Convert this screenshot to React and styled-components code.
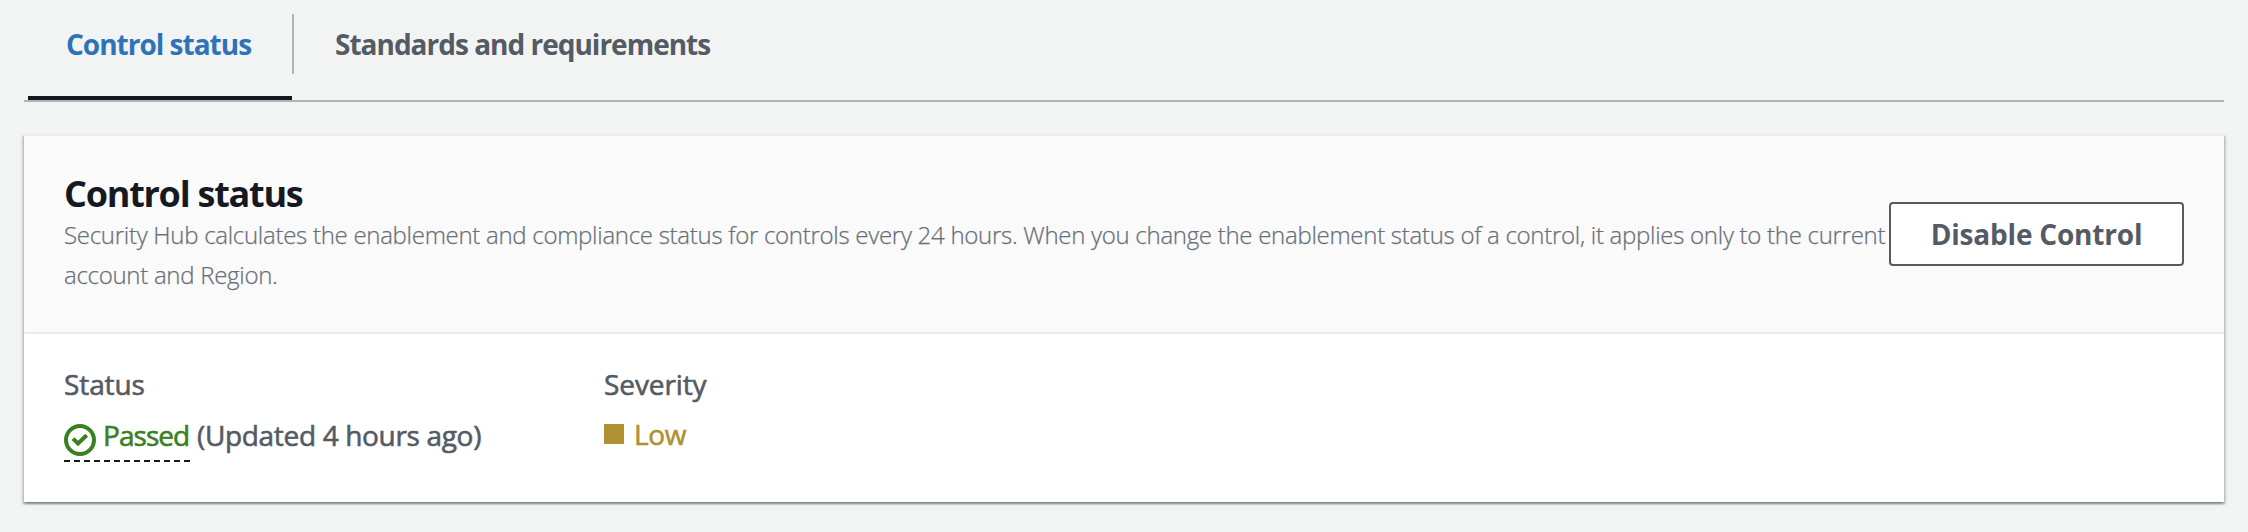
import React from 'react';
import styled, { createGlobalStyle } from 'styled-components';

const GlobalStyle = createGlobalStyle`
  * { box-sizing: border-box; }
  body {
    margin: 0;
    background: #f2f3f3;
    font-family: "Open Sans", "Noto Sans", sans-serif;
    font-size: 28px;
    line-height: 40px;
    color: #545b64;
  }
`;

const Page = styled.main`
  min-height: 532px;
  padding: 14px 24px 0;
`;

const TabList = styled.nav`
  display: flex;
  height: 88px;
  padding-left: 4px;
  border-bottom: 2px solid #aab7b8;
`;

const Tab = styled.button`
  display: flex;
  align-items: flex-start;
  width: ${p => p.$width}px;
  height: 86px;
  padding: 10px 0 0 ${p => p.$inset}px;
  border: 0;
  border-bottom: 4px solid ${p => (p.$active ? '#16191f' : 'transparent')};
  background: none;
  font: inherit;
  font-weight: 700;
  letter-spacing: -1px;
  white-space: nowrap;
  color: ${p => (p.$active ? '#2e73b8' : '#545b64')};
`;

const TabDivider = styled.span`
  width: 2px;
  height: 60px;
  background: #aab7b8;
`;

const Card = styled.section`
  height: 368px;
  margin-top: 32px;
  border-top: 2px solid #eaeded;
  background: #fff;
  box-shadow:
    0 2px 2px 0 rgba(0, 28, 36, 0.3),
    2px 2px 2px 0 rgba(0, 28, 36, 0.15),
    -2px 2px 2px 0 rgba(0, 28, 36, 0.15);
`;

const CardHeader = styled.header`
  display: flex;
  align-items: center;
  justify-content: space-between;
  height: 198px;
  padding: 0 40px;
  border-bottom: 2px solid #eaeded;
  background: #fafafa;
`;

const HeaderText = styled.div`
  flex: 1;
  min-width: 0;
  padding-bottom: 3px;
`;

const Title = styled.h2`
  margin: 0;
  padding-top: 1px;
  font-size: 36px;
  line-height: 43px;
  font-weight: 700;
  letter-spacing: -1.25px;
  color: #16191f;
`;

const Description = styled.p`
  margin: 0;
  font-size: 24px;
  line-height: 40px;
  font-weight: 300;
  letter-spacing: -0.284px;
  -webkit-text-stroke: 0.25px #687078;
  color: #687078;
`;

const OutlineButton = styled.button`
  flex: none;
  width: 295px;
  height: 64px;
  padding: 0;
  border: 2px solid #545b64;
  border-radius: 4px;
  background: #fff;
  font: inherit;
  font-weight: 700;
  letter-spacing: -0.2px;
  color: #545b64;
`;

const Fields = styled.div`
  display: grid;
  grid-template-columns: 540px 1fr;
  padding: 30px 40px 0;
  font-weight: 500;
  -webkit-text-stroke: 0.6px currentColor;
`;

const FieldLabel = styled.div`
  letter-spacing: -0.1px;
`;

const FieldValue = styled.div`
  display: flex;
  align-items: flex-start;
  margin-top: ${p => p.$gap}px;
`;

const StatusLink = styled.span`
  display: flex;
  width: 126px;
  height: 47px;
  letter-spacing: -0.95px;
  color: #3a8021;
  background: repeating-linear-gradient(to right, #16191f 0 6px, transparent 6px 10px) bottom / 100% 2px no-repeat;
`;

const StatusIcon = styled.svg`
  flex: none;
  width: 32px;
  height: 32px;
  margin: 9px 7px 0 0;
`;

const Updated = styled.span`
  margin-left: 7px;
  letter-spacing: -0.33px;
`;

const Severity = styled.span`
  display: flex;
  align-items: center;
  color: #b09132;
`;

const SeveritySwatch = styled.span`
  width: 20px;
  height: 20px;
  margin-right: 10px;
  background: #b09132;
`;

const SeverityText = styled.span`
  letter-spacing: -0.4px;
`;

export default function App() {
  return (
    <>
      <GlobalStyle />
      <Page>
        <TabList>
          <Tab $active $width={264} $inset={38}>Control status</Tab>
          <TabDivider />
          <Tab $width={460} $inset={41}>Standards and requirements</Tab>
        </TabList>
        <Card>
          <CardHeader>
            <HeaderText>
              <Title>Control status</Title>
              <Description>
                Security Hub calculates the enablement and compliance status for controls every 24 hours. When you change the enablement status of a control, it applies only to the current account and Region.
              </Description>
            </HeaderText>
            <OutlineButton>Disable Control</OutlineButton>
          </CardHeader>
          <Fields>
            <div>
              <FieldLabel>Status</FieldLabel>
              <FieldValue $gap={11}>
                <StatusLink>
                  <StatusIcon viewBox="0 0 32 32" fill="none" stroke="#3a8021" strokeWidth="4">
                    <circle cx="16" cy="16" r="14" />
                    <path d="M9 14.6L14 19.5L22.7 11.2" />
                  </StatusIcon>
                  Passed
                </StatusLink>
                <Updated>(Updated 4 hours ago)</Updated>
              </FieldValue>
            </div>
            <div>
              <FieldLabel>Severity</FieldLabel>
              <FieldValue $gap={10}>
                <Severity>
                  <SeveritySwatch />
                  <SeverityText>Low</SeverityText>
                </Severity>
              </FieldValue>
            </div>
          </Fields>
        </Card>
      </Page>
    </>
  );
}
